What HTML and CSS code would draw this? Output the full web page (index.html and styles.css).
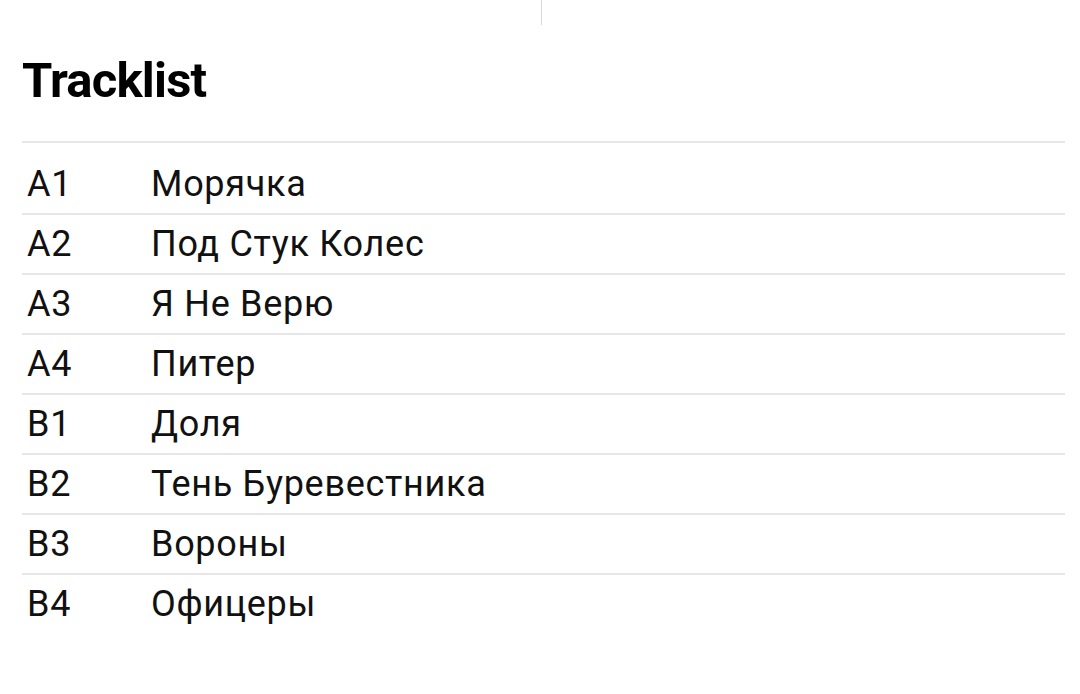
FILE: index.html
```html
<!DOCTYPE html>
<html lang="ru">
<head>
<meta charset="utf-8">
<title>Tracklist</title>
<link rel="stylesheet" href="styles.css">
</head>
<body>
<div class="page">
  <div class="top-divider"><span class="vline"></span></div>
  <section class="tracklist">
    <h2 class="title">Tracklist</h2>
    <ul class="tracks">
      <li class="track"><span class="pos">A1</span><span class="name">Морячка</span></li>
      <li class="track"><span class="pos">A2</span><span class="name">Под Стук Колес</span></li>
      <li class="track"><span class="pos">A3</span><span class="name">Я Не Верю</span></li>
      <li class="track"><span class="pos">A4</span><span class="name">Питер</span></li>
      <li class="track"><span class="pos">B1</span><span class="name">Доля</span></li>
      <li class="track"><span class="pos">B2</span><span class="name">Тень Буревестника</span></li>
      <li class="track"><span class="pos">B3</span><span class="name">Вороны</span></li>
      <li class="track"><span class="pos">B4</span><span class="name">Офицеры</span></li>
    </ul>
  </section>
</div>
</body>
</html>
```

FILE: styles.css
```css
html, body {
  margin: 0;
  padding: 0;
  background: #ffffff;
}

body {
  font-family: Roboto, "Noto Sans", "Liberation Sans", sans-serif;
  color: #111111;
  width: 1080px;
  height: 694px;
  overflow: hidden;
}

.page {
  display: flex;
  flex-direction: column;
}

.top-divider {
  height: 25px;
  display: flex;
  justify-content: center;
  padding-left: 3px;
}

.vline {
  width: 1px;
  height: 25px;
  background: #d8d8d8;
}

.tracklist {
  padding: 26px 15px 0 22px;
}

.title {
  margin: 0;
  font-size: 49px;
  line-height: 60px;
  font-weight: 700;
  color: #000000;
  letter-spacing: -0.8px;
  padding-bottom: 30px;
  border-bottom: 2px solid #e6e6e6;
}

.tracks {
  list-style: none;
  margin: 0;
  padding: 12px 0 0 0;
}

.track {
  display: flex;
  align-items: center;
  height: 58px;
  border-bottom: 2px solid #e6e6e6;
  font-size: 36px;
  letter-spacing: 0.7px;
}

.track:last-child {
  border-bottom: none;
}

.pos {
  width: 124px;
  padding-left: 5px;
  flex: none;
}

.name {
  flex: 1;
}
```
